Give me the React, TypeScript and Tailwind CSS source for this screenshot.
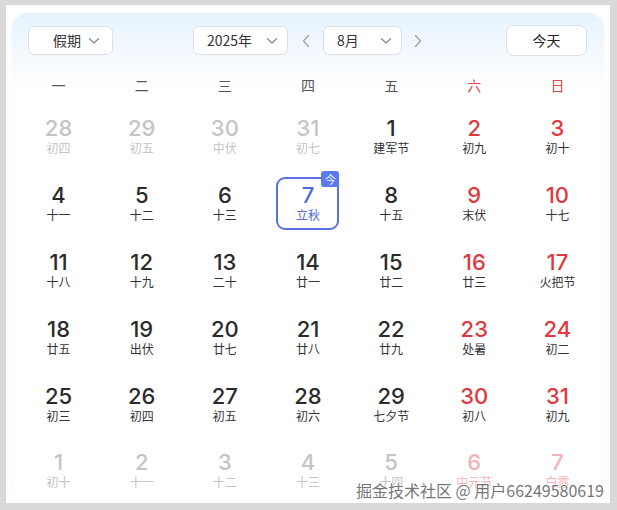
import React from "react";

type Cell = { d: number; l: string; t: "o" | "n" | "w" | "ow" };

const rows: Cell[][] = [
  [
    { d: 28, l: "初四", t: "o" },
    { d: 29, l: "初五", t: "o" },
    { d: 30, l: "中伏", t: "o" },
    { d: 31, l: "初七", t: "o" },
    { d: 1, l: "建军节", t: "n" },
    { d: 2, l: "初九", t: "w" },
    { d: 3, l: "初十", t: "w" },
  ],
  [
    { d: 4, l: "十一", t: "n" },
    { d: 5, l: "十二", t: "n" },
    { d: 6, l: "十三", t: "n" },
    { d: 7, l: "立秋", t: "n" },
    { d: 8, l: "十五", t: "n" },
    { d: 9, l: "末伏", t: "w" },
    { d: 10, l: "十七", t: "w" },
  ],
  [
    { d: 11, l: "十八", t: "n" },
    { d: 12, l: "十九", t: "n" },
    { d: 13, l: "二十", t: "n" },
    { d: 14, l: "廿一", t: "n" },
    { d: 15, l: "廿二", t: "n" },
    { d: 16, l: "廿三", t: "w" },
    { d: 17, l: "火把节", t: "w" },
  ],
  [
    { d: 18, l: "廿五", t: "n" },
    { d: 19, l: "出伏", t: "n" },
    { d: 20, l: "廿七", t: "n" },
    { d: 21, l: "廿八", t: "n" },
    { d: 22, l: "廿九", t: "n" },
    { d: 23, l: "处暑", t: "w" },
    { d: 24, l: "初二", t: "w" },
  ],
  [
    { d: 25, l: "初三", t: "n" },
    { d: 26, l: "初四", t: "n" },
    { d: 27, l: "初五", t: "n" },
    { d: 28, l: "初六", t: "n" },
    { d: 29, l: "七夕节", t: "n" },
    { d: 30, l: "初八", t: "w" },
    { d: 31, l: "初九", t: "w" },
  ],
  [
    { d: 1, l: "初十", t: "o" },
    { d: 2, l: "十一", t: "o" },
    { d: 3, l: "十二", t: "o" },
    { d: 4, l: "十三", t: "o" },
    { d: 5, l: "十四", t: "o" },
    { d: 6, l: "中元节", t: "ow" },
    { d: 7, l: "白露", t: "ow" },
  ],
];

const weekdays = ["一", "二", "三", "四", "五", "六", "日"];

const Chevron = ({ dir }: { dir: "down" | "left" | "right" }) => {
  if (dir === "down")
    return (
      <svg width="12" height="8" viewBox="0 0 12 8" fill="none">
        <path d="M1.5 1.8 L6 6 L10.5 1.8" stroke="#8a8a8a" strokeWidth="1.3" strokeLinecap="round" strokeLinejoin="round" />
      </svg>
    );
  return (
    <svg width="8" height="14" viewBox="0 0 8 14" fill="none">
      <path
        d={dir === "left" ? "M6.5 1.5 L1.5 7 L6.5 12.5" : "M1.5 1.5 L6.5 7 L1.5 12.5"}
        stroke="#a0a0a0"
        strokeWidth="1.3"
        strokeLinecap="round"
        strokeLinejoin="round"
      />
    </svg>
  );
};

const font = { fontFamily: "Inter, 'Noto Sans CJK SC', sans-serif" };
const cjk = { fontFamily: "'Noto Sans CJK SC', sans-serif" };

export default function App() {
  return (
    <div className="relative w-[617px] h-[510px] bg-[#d9d9d9] pt-[5px] pl-[6px] pr-[7px] pb-[7px] overflow-hidden" style={font}>
      <div className="bg-white w-full h-full pt-[8px] px-[6px] pb-[6px]">
        <div className="h-full rounded-2xl bg-[linear-gradient(180deg,#e6f3fd_0px,#f3f9fe_40px,#ffffff_75px)] shadow-[0_0_3px_rgba(0,0,0,0.05)] px-[5px] pt-[12px] overflow-hidden">
          {/* header */}
          <div className="flex items-center pl-[11px] pr-[12px] h-[31px]">
            <div className="w-[85px] h-[29px] rounded-md border border-[#dcdfe6] bg-white flex items-center pl-[24px] pr-[12px] justify-between text-[14px] text-[#333]" style={cjk}>
              <span>假期</span>
              <Chevron dir="down" />
            </div>
            <div className="ml-[80px] w-[95px] h-[29px] rounded-md border border-[#dcdfe6] bg-white flex items-center pl-[13px] pr-[9px] justify-between text-[14px] text-[#333]" style={cjk}>
              <span>2025年</span>
              <Chevron dir="down" />
            </div>
            <div className="w-[35px] flex items-center justify-center">
              <Chevron dir="left" />
            </div>
            <div className="w-[79px] h-[29px] rounded-md border border-[#dcdfe6] bg-white flex items-center pl-[13px] pr-[9px] justify-between text-[14px] text-[#333]" style={cjk}>
              <span>8月</span>
              <Chevron dir="down" />
            </div>
            <div className="w-[32px] flex items-center justify-center">
              <Chevron dir="right" />
            </div>
            <div className="ml-auto w-[81px] h-[31px] rounded-lg border border-[#dcdfe6] bg-white flex items-center justify-center text-[14px] text-[#222]" style={cjk}>
              今天
            </div>
          </div>
          {/* weekdays */}
          <div className="grid grid-cols-7 mt-[11px] h-[36px] items-center text-[14px]" style={cjk}>
            {weekdays.map((w, i) => (
              <div key={w} className={`text-center ${i >= 5 ? "text-[#e0474c]" : "text-[#555]"}`}>
                {w}
              </div>
            ))}
          </div>
          {/* days */}
          <div className="flex flex-col">
            {rows.map((r, ri) => (
              <div key={ri} className="grid grid-cols-7 h-[66.8px]">
                {r.map((c, ci) => {
                  const today = ri === 1 && ci === 3;
                  let numC = "text-[#2b2b2b]";
                  let lunC = "text-[#333]";
                  if (c.t === "w") {
                    numC = "text-[#e0383e]";
                    lunC = "text-[#333]";
                  } else if (c.t === "o") {
                    numC = "text-[#c4c4c4]";
                    lunC = "text-[#c4c4c4]";
                  } else if (c.t === "ow") {
                    numC = "text-[#f4b3b6]";
                    lunC = "text-[#f4b3b6]";
                  }
                  if (today) {
                    numC = "text-[#5068e0]";
                    lunC = "text-[#5068e0]";
                  }
                  return (
                    <div key={ci} className="flex items-center justify-center">
                      <div
                        className={`relative flex flex-col items-center justify-center ${
                          today ? "w-[63px] h-[53px] rounded-[9px] border-2 border-[#5b72e3]" : ""
                        }`}
                      >
                        <div className={`text-[22px] leading-[24px] font-medium ${numC}`} style={font}>
                          {c.d}
                        </div>
                        <div className={`text-[12px] leading-[16px] ${lunC}`} style={cjk}>
                          {c.l}
                        </div>
                        {today && (
                          <div className="absolute -top-[8px] -right-[2px] w-[18px] h-[16px] rounded-[3px] bg-[#5a7bef] text-white text-[11px] leading-[16px] text-center" style={cjk}>
                            今
                          </div>
                        )}
                      </div>
                    </div>
                  );
                })}
              </div>
            ))}
          </div>
        </div>
      </div>
      {/* watermark */}
      <div
        className="absolute right-[13px] bottom-[10px] text-[16px] leading-[20px] text-[rgba(90,90,90,0.85)] whitespace-nowrap"
        style={{ fontFamily: "'Noto Sans CJK SC', sans-serif", textShadow: "0 0 2px #fff, 0 0 2px #fff, 0 0 1px #fff" }}
      >
        掘金技术社区 @ 用户66249580619
      </div>
    </div>
  );
}
